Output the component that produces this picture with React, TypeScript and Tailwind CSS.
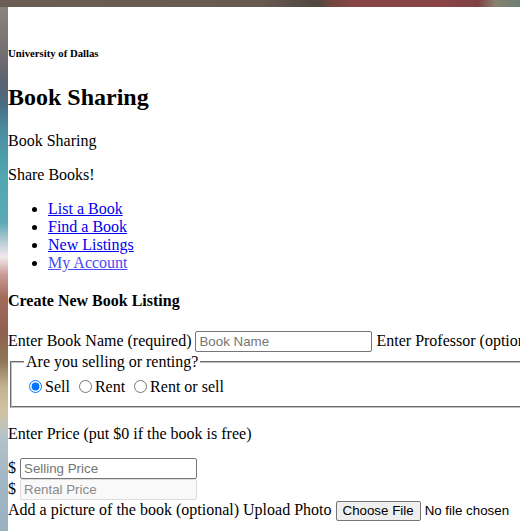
import React from "react";

const inputCls =
  "inline-block w-[177px] h-[21px] box-border border border-[#767676] rounded-[2px] px-[3px] py-[1px] bg-white text-black font-['Liberation_Sans',Arial,sans-serif] text-[13.33px] leading-[normal] placeholder:text-[#757575] outline-none align-baseline";

export default function App() {
  return (
    <div className="h-screen w-screen overflow-hidden flex flex-col bg-white">
      <div className="h-[7px] shrink-0 bg-[linear-gradient(to_right,#6b5e55_0px,#6a5c51_120px,#675a50_260px,#574c46_300px,#4f4740_318px,#70463f_330px,#874546_355px,#8a4446_440px,#804043_478px,#8a8070_495px,#6b8072_520px)]" />
      <div className="flex flex-1 min-h-0">
        <div className="w-[8px] shrink-0 bg-[linear-gradient(to_bottom,#8a837d_0px,#7d7773_30px,#6d6a70_55px,#5b6172_75px,#4a6a82_95px,#4a8fa2_125px,#50a7b1_170px,#5aa9b6_215px,#b9cdd4_235px,#f2e9ec_250px,#c99a94_268px,#a36a5b_290px,#8f604f_325px,#8f7757_355px,#c2b291_380px,#d1c3a3_405px,#b3c2c9_430px,#a2b8c6_470px,#98b0c0_524px)]" />
        <div className="flex-1 min-w-0 bg-white text-black font-['Liberation_Serif','Times_New_Roman',serif] text-[16px] leading-[normal]">
          <div className="pt-[40px]">
            <h6 className="text-[10.72px] font-bold leading-[normal]">University of Dallas</h6>
          </div>
          <h1 className="mt-[25px] text-[24px] font-bold leading-[normal]">Book Sharing</h1>
          <p className="mt-[21px]">Book Sharing</p>
          <p className="mt-[16px]">Share Books!</p>
          <ul className="mt-[16px] list-disc pl-[40px]">
            <li>
              <a href="#" className="text-[#0000ee] underline">List a Book</a>
            </li>
            <li>
              <a href="#" className="text-[#0000ee] underline">Find a Book</a>
            </li>
            <li>
              <a href="#" className="text-[#0000ee] underline">New Listings</a>
            </li>
            <li>
              <a href="#" className="text-[#4b4bef] underline">My Account</a>
            </li>
          </ul>
          <h4 className="mt-[20px] text-[16px] font-bold leading-[normal]">Create New Book Listing</h4>
          <form className="mt-[21px] w-[900px]" onSubmit={(e) => e.preventDefault()}>
            <div className="whitespace-nowrap">
              Enter Book Name (required){" "}
              <input type="text" placeholder="Book Name" className={inputCls} />{" "}
              Enter Professor (optional){" "}
              <input type="text" placeholder="Professor" className={inputCls} />
            </div>
            <fieldset className="mt-[1px] ml-[2px] w-[700px] border-2 [border-style:groove] border-[#c0c0c0] px-[12px] pt-[5.6px] pb-[10px]">
              <legend className="px-[2px]">Are you selling or renting?</legend>
              <label>
                <input type="radio" name="mode" defaultChecked className="m-[3px_3px_0_5px] align-[-1px]" />
                Sell
              </label>{" "}
              <label>
                <input type="radio" name="mode" className="m-[3px_3px_0_5px] align-[-1px]" />
                Rent
              </label>{" "}
              <label>
                <input type="radio" name="mode" className="m-[3px_3px_0_5px] align-[-1px]" />
                Rent or sell
              </label>
            </fieldset>
            <p className="mt-[17px]">Enter Price (put $0 if the book is free)</p>
            <div className="mt-[15px] whitespace-nowrap">
              ${" "}
              <input type="text" placeholder="Selling Price" className={inputCls} />
              <br />
              ${" "}
              <input
                type="text"
                placeholder="Rental Price"
                disabled
                className="inline-block w-[177px] h-[21px] box-border border border-[#dcdcdc] rounded-[2px] px-[3px] py-[1px] bg-[#f9f9f9] font-['Liberation_Sans',Arial,sans-serif] text-[13.33px] leading-[normal] placeholder:text-[#8a8a8a] outline-none align-baseline"
              />
              <br />
              <span className="inline-block pt-[1px]">
                Add a picture of the book (optional) Upload Photo{" "}
                <span className="inline-block h-[20px] box-border border border-[#767676] rounded-[2px] bg-[#efefef] px-[6px] py-[1px] font-['Liberation_Sans',Arial,sans-serif] text-[13.33px] leading-[normal] text-black align-baseline">
                  Choose File
                </span>
                <span className="ml-[4px] font-['Liberation_Sans',Arial,sans-serif] text-[13.33px]">No file chosen</span>
              </span>
            </div>
          </form>
        </div>
      </div>
    </div>
  );
}
